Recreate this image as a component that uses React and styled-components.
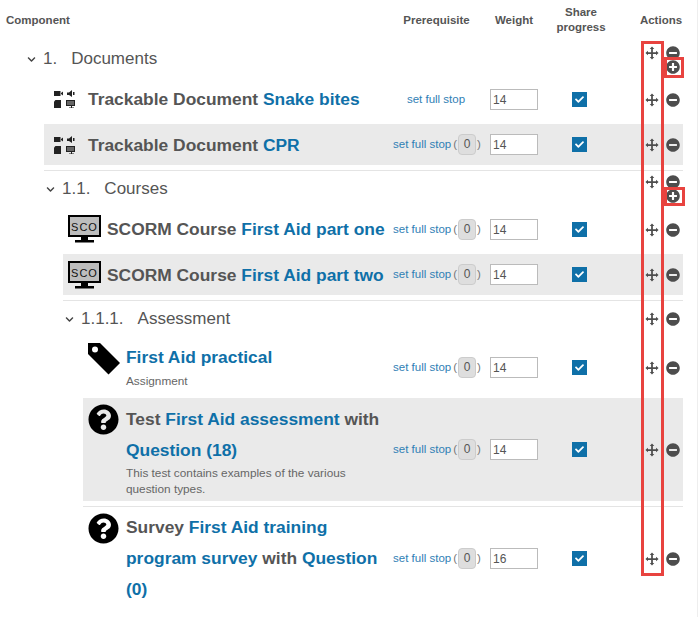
import React from 'react';
import styled, { createGlobalStyle } from 'styled-components';
import { FaCheck, FaChevronDown, FaMinusCircle, FaPlusCircle, FaQuestionCircle } from 'react-icons/fa';

const GlobalStyle = createGlobalStyle`
  html, body {
    margin: 0;
    padding: 0;
    background: #fff;
  }
  body {
    font-family: "Liberation Sans", Arial, sans-serif;
    color: #555;
  }
`;

const Page = styled.div`
  position: relative;
  box-sizing: border-box;
  width: 698px;
  height: 617px;
  padding-right: 14px;
  border-right: 1px solid #eee;
  overflow: hidden;
`;

const columns = 'minmax(0, 1fr) 98px 58px 72px 68px';

const Header = styled.div`
  display: grid;
  grid-template-columns: ${columns};
  align-items: center;
  height: 40px;
  font-size: 11.5px;
  font-weight: bold;
  line-height: 15px;
  color: #555;
`;

const HeadCell = styled.div`
  text-align: center;
  padding-left: ${p => p.$pad || 0}px;
`;

const ComponentHead = styled.div`
  padding-left: 6px;
`;

const Row = styled.div`
  display: grid;
  grid-template-columns: ${columns};
  align-items: center;
  margin-left: ${p => p.$indent}px;
  margin-bottom: ${p => p.$gap ?? 4}px;
  background: ${p => (p.$shaded ? '#eaeaea' : 'transparent')};
`;

const SectionRow = styled(Row)`
  height: ${p => p.$height || 36}px;
`;

const SectionName = styled.div`
  display: flex;
  align-items: center;
  font-size: 17px;
  color: #555;
  padding-left: ${p => p.$pad}px;
`;

const Chevron = styled(FaChevronDown)`
  width: 9px;
  height: 9px;
  color: #444;
  margin-right: 7px;
`;

const SectionNumber = styled.span`
  display: inline-block;
  margin-right: 14px;
`;

const Main = styled.div`
  display: flex;
  align-items: flex-start;
  padding: ${p => (p.$shaded ? 6 : 5)}px 0 ${p => p.$bottom ?? (p.$shaded ? 4 : 5)}px ${p => p.$pad}px;
`;

const IconSlot = styled.div`
  box-sizing: border-box;
  flex: none;
  width: ${p => p.$width}px;
  height: 31px;
  display: flex;
  align-items: flex-start;
  padding-top: ${p => p.$top || 0}px;
`;

const Body = styled.div`
  flex: 1;
  min-width: 0;
`;

const Title = styled.div`
  font-size: 17.4px;
  font-weight: bold;
  line-height: 31px;
  color: #555;
`;

const Name = styled.span`
  color: #0f70a8;
`;

const Note = styled.div`
  max-width: 225px;
  margin-top: ${p => p.$top || 0}px;
  font-size: 11.8px;
  line-height: 16px;
  color: #666;
`;

const Prereq = styled.div`
  display: flex;
  align-items: center;
  justify-content: center;
  padding: 0 0 1px 2px;
  font-size: 11.5px;
  color: #777;
  white-space: nowrap;
`;

const FullStop = styled.span`
  color: #2f80b5;
  margin-right: 2px;
`;

const Badge = styled.span`
  box-sizing: border-box;
  width: 18px;
  height: 21px;
  margin: 0 1px;
  display: flex;
  align-items: center;
  justify-content: center;
  background: #dedede;
  border: 1px solid #ccc;
  border-radius: 4px;
  font-size: 12px;
  color: #555;
`;

const WeightCell = styled.div`
  padding-left: 5px;
`;

const WeightInput = styled.input`
  box-sizing: border-box;
  display: block;
  width: 48px;
  height: 21px;
  padding: 0 2px;
  background: #fff;
  border: 1px solid #bbb;
  font-family: inherit;
  font-size: 12px;
  color: #555;
  outline: none;
`;

const ShareCell = styled.div`
  display: flex;
  justify-content: center;
`;

const Tick = styled.span`
  width: 15px;
  height: 15px;
  display: flex;
  align-items: center;
  justify-content: center;
  background: #0f70a8;
  color: #fff;
  font-size: 9px;
`;

const Actions = styled.div`
  display: flex;
  justify-content: flex-end;
  align-items: flex-start;
  gap: 7px;
  padding-right: 3px;
  margin-top: ${p => p.$drop || 0}px;
`;

const MoveIcon = styled.svg`
  display: block;
  width: 14px;
  height: 14px;
  flex: none;
`;

const Buttons = styled.div`
  display: flex;
  flex-direction: column;
  color: #4d4d4d;
  font-size: 14px;
  line-height: 0;
`;

const Divider = styled.div`
  margin: 5px 0 0 ${p => p.$indent}px;
  height: 1px;
  background: #e4e4e4;
`;

const RedBox = styled.div`
  position: absolute;
  box-sizing: border-box;
  left: ${p => p.$x}px;
  top: ${p => p.$y}px;
  width: ${p => p.$w}px;
  height: ${p => p.$h}px;
  border: 3px solid #e8433f;
`;

const Move = () => (
  <MoveIcon viewBox="0 0 16 16">
    <path d="M8 0.5 L10.6 3.4 L9 3.4 L9 7 L12.6 7 L12.6 5.4 L15.5 8 L12.6 10.6 L12.6 9 L9 9 L9 12.6 L10.6 12.6 L8 15.5 L5.4 12.6 L7 12.6 L7 9 L3.4 9 L3.4 10.6 L0.5 8 L3.4 5.4 L3.4 7 L7 7 L7 3.4 L5.4 3.4 Z" fill="#4d4d4d" />
  </MoveIcon>
);

const RowActions = ({ plus, drop }) => (
  <Actions $drop={drop}>
    <Move />
    <Buttons>
      <FaMinusCircle />
      {plus && <FaPlusCircle />}
    </Buttons>
  </Actions>
);

const DocIcon = () => (
  <svg width="22" height="19" viewBox="0 0 22 19">
    <path d="M0 1h6.500v5H0z M7 3l2-1.500v4L7 4z" fill="#222" />
    <path d="M13 2.500h2L18 0v7l-3-2h-2z" fill="#222" />
    <path d="M19 2h1.500v3H19z" fill="#222" />
    <path d="M1.500 10H7v8H0v-6.500z" fill="#222" />
    <path d="M12 10h9v6h-3v1.500h2V18h-5v-.5h2V16h-5z" fill="#222" />
    <path d="M13 11h7v4h-7z" fill="#666" />
  </svg>
);

const ScormIcon = () => (
  <svg width="33" height="28" viewBox="0 0 33 28">
    <rect x="1" y="1" width="31" height="20" fill="#bdbdbd" stroke="#000" strokeWidth="2" />
    <text x="16.5" y="15.500" textAnchor="middle" fontFamily="'Liberation Sans', sans-serif" fontSize="11" letterSpacing="1" fill="#111">SCO</text>
    <path d="M13 22h7v3h-7z M7 25h19v2.500H7z" fill="#000" />
  </svg>
);

const TagIcon = () => (
  <svg width="33" height="33" viewBox="0 0 33 33">
    <path fillRule="evenodd" fill="#000" d="M1 1h12l20 20-11.500 11.500L1 12zM8 4.500a3 3 0 1 0 0 6 3 3 0 0 0 0-6z" />
  </svg>
);

const QuestionIcon = styled(FaQuestionCircle)`
  width: 31px;
  height: 31px;
  color: #000;
`;

const Controls = ({ stop, value }) => (
  <>
    <Prereq>
      <FullStop>set full stop</FullStop>
      {stop && (
        <>
          (<Badge>0</Badge>)
        </>
      )}
    </Prereq>
    <WeightCell>
      <WeightInput value={value} readOnly />
    </WeightCell>
    <ShareCell>
      <Tick>
        <FaCheck />
      </Tick>
    </ShareCell>
    <RowActions />
  </>
);

const Section = ({ pad, number, name, plus, height, gap, drop }) => (
  <SectionRow $indent={0} $height={height} $gap={gap}>
    <SectionName $pad={pad}>
      <Chevron />
      <SectionNumber>{number}</SectionNumber>
      {name}
    </SectionName>
    <div />
    <div />
    <div />
    <RowActions plus={plus} drop={drop} />
  </SectionRow>
);

export default function App() {
  return (
    <Page>
      <GlobalStyle />
      <Header>
        <ComponentHead>Component</ComponentHead>
        <HeadCell $pad={1}>Prerequisite</HeadCell>
        <HeadCell>Weight</HeadCell>
        <HeadCell $pad={4}>
          Share
          <br />
          progress
        </HeadCell>
        <HeadCell $pad={24}>Actions</HeadCell>
      </Header>

      <Section pad={27} number="1." name="Documents" plus height={38} gap={1} drop={2} />

      <Row $indent={44}>
        <Main $pad={10}>
          <IconSlot $width={34} $top={6}><DocIcon /></IconSlot>
          <Body><Title>Trackable Document <Name>Snake bites</Name></Title></Body>
        </Main>
        <Controls value="14" />
      </Row>

      <Row $indent={44} $shaded $gap={0}>
        <Main $pad={10} $shaded>
          <IconSlot $width={34} $top={6}><DocIcon /></IconSlot>
          <Body><Title>Trackable Document <Name>CPR</Name></Title></Body>
        </Main>
        <Controls stop value="14" />
      </Row>
      <Divider $indent={44} />

      <Section pad={46} number="1.1." name="Courses" plus gap={2} />

      <Row $indent={63}>
        <Main $pad={5}>
          <IconSlot $width={39} $top={1}><ScormIcon /></IconSlot>
          <Body><Title>SCORM Course <Name>First Aid part one</Name></Title></Body>
        </Main>
        <Controls stop value="14" />
      </Row>

      <Row $indent={63} $shaded $gap={0}>
        <Main $pad={5} $shaded>
          <IconSlot $width={39} $top={1}><ScormIcon /></IconSlot>
          <Body><Title>SCORM Course <Name>First Aid part two</Name></Title></Body>
        </Main>
        <Controls stop value="14" />
      </Row>
      <Divider $indent={63} />

      <Section pad={65} number="1.1.1." name="Assessment" gap={0} />

      <Row $indent={83} $gap={0}>
        <Main $pad={4} $bottom={9}>
          <IconSlot $width={39}><TagIcon /></IconSlot>
          <Body>
            <Title><Name>First Aid practical</Name></Title>
            <Note>Assignment</Note>
          </Body>
        </Main>
        <Controls stop value="14" />
      </Row>

      <Row $indent={83} $shaded $gap={0}>
        <Main $pad={5} $shaded>
          <IconSlot $width={38}><QuestionIcon /></IconSlot>
          <Body>
            <Title>Test <Name>First Aid assessment</Name> with <Name>Question (18)</Name></Title>
            <Note $top={-1}>This test contains examples of the various question types.</Note>
          </Body>
        </Main>
        <Controls stop value="14" />
      </Row>
      <Divider $indent={83} />

      <Row $indent={83}>
        <Main $pad={5}>
          <IconSlot $width={38} $top={1}><QuestionIcon /></IconSlot>
          <Body>
            <Title>Survey <Name>First Aid training program survey</Name> with <Name>Question (0)</Name></Title>
          </Body>
        </Main>
        <Controls stop value="16" />
      </Row>

      <RedBox $x={641} $y={41} $w={23} $h={535} />
      <RedBox $x={664} $y={57} $w={20} $h={21} />
      <RedBox $x={664} $y={187} $w={21} $h={19} />
    </Page>
  );
}
